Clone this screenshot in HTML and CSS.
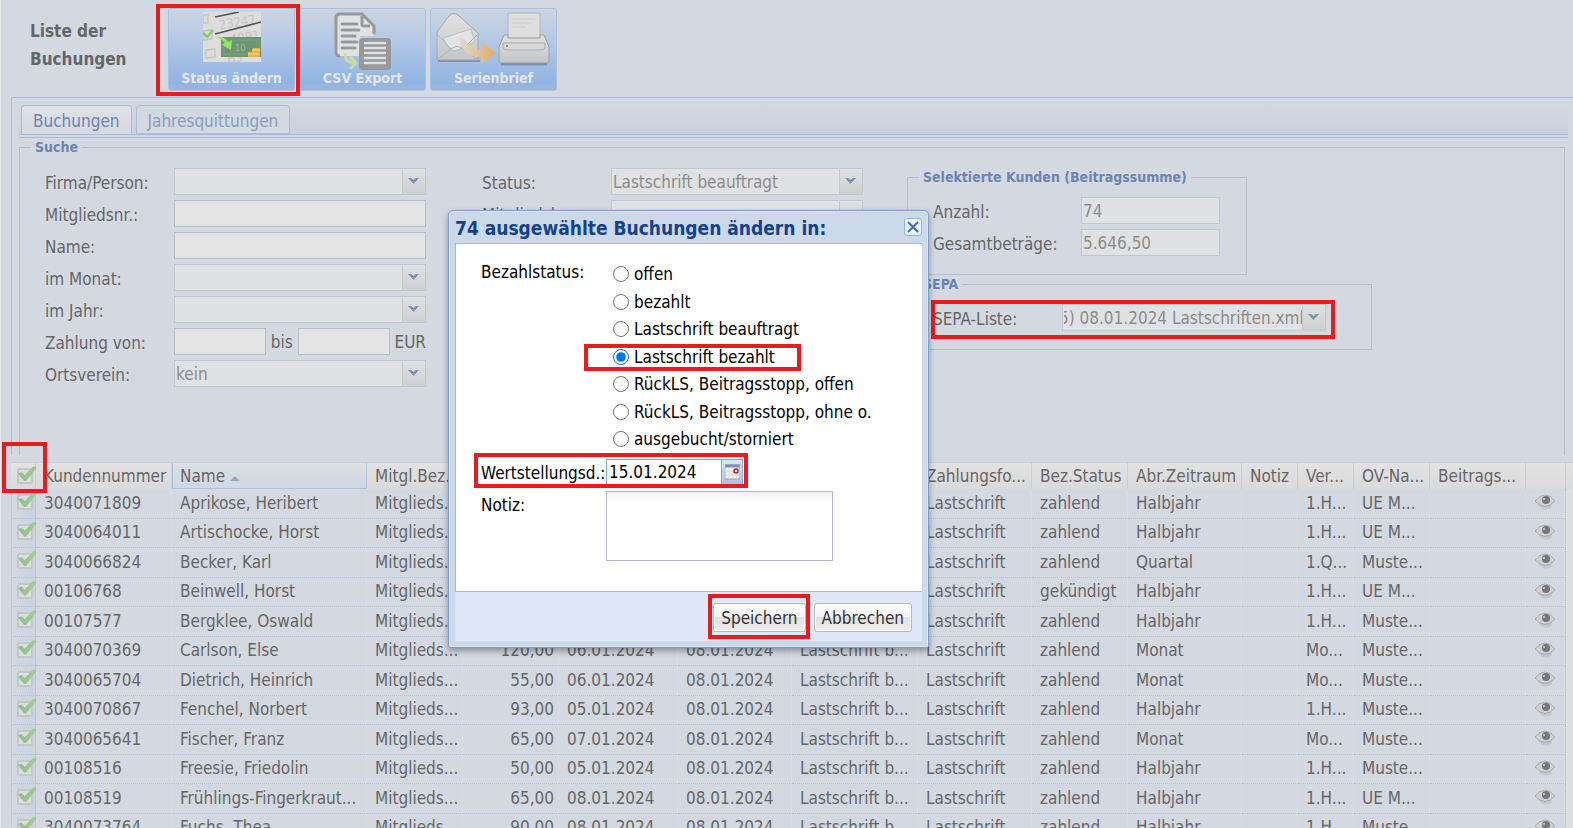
FILE: index.html
```html
<!DOCTYPE html>
<html lang="de">
<head>
    <meta charset="UTF-8">
    <meta name="viewport" content="width=device-width, initial-scale=1.0">
    <title>Liste der Buchungen</title>
    <link rel="stylesheet" href="styles.css">
</head>
<body>
    <header class="toolbar">
        <h1 class="title">Liste der Buchungen</h1>
        <div class="actions">
            <button class="action marked" type="button">
                <svg width="58" height="50" viewBox="0 0 58 50">
                    <rect width="58" height="50" fill="#dcdddc"/>
                    <g fill="none" stroke="#c2c3c2" stroke-width="1.3">
                        <path d="M0 3h5v8H0zM0 19l9-1v9l-9 1zM3 38l9-1v8l-9 1z"/>
                    </g>
                    <g class="digits" transform="rotate(-9 20 20)">
                        <text x="17" y="17">23247</text>
                        <text x="26" y="33">4091</text>
                        <text x="20" y="52">B3</text>
                    </g>
                    <path d="M12 5l24-5M12 22l46-12" stroke="#555" stroke-width="1.6"/>
                    <rect x="18" y="25" width="40" height="20" fill="#6f9672"/>
                    <rect x="21" y="28" width="34" height="14" fill="none" stroke="#7c9f7f"/>
                    <text class="note" x="32" y="39">10</text>
                    <path d="M0 21l4 4 6-7" fill="none" stroke="#7fcf5a" stroke-width="2.5"/>
                    <path d="M13 25c6-1 10 1 12 5l4-2-1 10-9-5 3-2c-2-3-5-4-9-6z" fill="#8fe861"/>
                    <path d="M45 45h12v-9h-7l-1 4h-4z" fill="#edb04a"/>
                    <path d="M45 42h11M49 38h8" stroke="#f6d372" stroke-width="1.5"/>
                </svg>
                <span>Status ändern</span>
            </button>
            <button class="action" type="button">
                <svg width="58" height="58" viewBox="0 0 58 58">
                    <path d="M5 44H3V5q0-3 3-3h21l12 12v10H26v20z" fill="#e1e2e2"/>
                    <path d="M6 44q-4 0-4-4V6q0-4 4-4h22l12 12v8M28 4v8q0 2 2 2h6" fill="none" stroke="#98999b" stroke-width="3"/>
                    <path d="M8 12h15M8 18h17M8 24h13M8 30h15M8 36h13" stroke="#98999b" stroke-width="3" stroke-linecap="round"/>
                    <rect x="25" y="26" width="32" height="32" rx="4" fill="#98999b"/>
                    <path d="M30 31h22M30 36h22M30 41h22M30 46h22M30 51h22" stroke="#dfe0e1" stroke-width="2.5"/>
                    <path d="M11 41c0 7 2 9 9 10M16 45l6 6-6 6" fill="none" stroke="#c9dba0" stroke-width="3"/>
                </svg>
                <span>CSV Export</span>
            </button>
            <button class="action" type="button">
                <svg width="118" height="54" viewBox="0 0 118 54">
                    <defs>
                        <linearGradient id="paper" x1="0" y1="0" x2="0" y2="1">
                            <stop offset="0" stop-color="#e2e2e2"/>
                            <stop offset="1" stop-color="#c4c5c6"/>
                        </linearGradient>
                        <linearGradient id="arrow" x1="0" y1="0" x2="1" y2="0">
                            <stop offset="0" stop-color="#dddad5"/>
                            <stop offset="1" stop-color="#e8aa5a"/>
                        </linearGradient>
                    </defs>
                    <path d="M3 49h42" stroke="#7f93b0" stroke-width="2"/>
                    <path d="M2 20L14 4q5-5 10 0l19 17v27H2z" fill="url(#paper)" stroke="#a5a6a8"/>
                    <path d="M8 26l28-9 4 13-20 9-6-2z" fill="#e3e3e3" stroke="#bcbdbf"/>
                    <path d="M2 22l14 15L2 48M43 22L28 37l15 11M16 37q6-5 12 0" fill="none" stroke="#aeb0b2"/>
                    <path d="M24 25c8 1 10 13 22 13v-8l15 11-15 11v-7c-14 0-20-7-22-20z" fill="url(#arrow)"/>
                    <path d="M66 52h46" stroke="#7f93b0" stroke-width="3"/>
                    <path d="M73 1h32v26H73z" fill="#dedede" stroke="#b5b6b8"/>
                    <path d="M77 7h24M77 11h20M77 15h14" stroke="#cbcccd"/>
                    <path d="M69 23h4v3h32v-3h4l5 12v14q0 2-2 2H66q-2 0-2-2V35z" fill="url(#paper)" stroke="#9c9ea0"/>
                    <path d="M68 31h42v4q0 3-3 3H71q-3 0-3-3z" fill="#d8d8d8" stroke="#a9abad"/>
                    <circle cx="72" cy="34" r="1" fill="#777"/>
                </svg>
                <span>Serienbrief</span>
            </button>
        </div>
    </header>

    <main class="panel">
        <nav class="tabs">
            <button class="tab active" type="button">Buchungen</button>
            <button class="tab" type="button">Jahresquittungen</button>
        </nav>

        <fieldset class="search">
            <legend>Suche</legend>
            <div class="columns">
                <div class="column">
                    <div class="row">
                        <label for="firma">Firma/Person:</label>
                        <span class="combo"><select id="firma" disabled><option></option></select></span>
                    </div>
                    <div class="row">
                        <label for="mitgliedsnr">Mitgliedsnr.:</label>
                        <input id="mitgliedsnr" type="text">
                    </div>
                    <div class="row">
                        <label for="name">Name:</label>
                        <input id="name" type="text">
                    </div>
                    <div class="row">
                        <label for="monat">im Monat:</label>
                        <span class="combo"><select id="monat" disabled><option></option></select></span>
                    </div>
                    <div class="row">
                        <label for="jahr">im Jahr:</label>
                        <span class="combo"><select id="jahr" disabled><option></option></select></span>
                    </div>
                    <div class="row">
                        <label for="von">Zahlung von:</label>
                        <div class="range">
                            <input id="von" type="text">
                            <label for="bis">bis</label>
                            <input id="bis" type="text">
                            <span>EUR</span>
                        </div>
                    </div>
                    <div class="row">
                        <label for="ortsverein">Ortsverein:</label>
                        <span class="combo"><select id="ortsverein" disabled><option>kein</option></select></span>
                    </div>
                </div>

                <div class="column">
                    <div class="row">
                        <label for="status">Status:</label>
                        <span class="combo"><select id="status" disabled><option>Lastschrift beauftragt</option></select></span>
                    </div>
                    <div class="row">
                        <label for="beitrag">Mitgliedsb.:</label>
                        <span class="combo"><select id="beitrag" disabled><option></option></select></span>
                    </div>
                </div>

                <div class="summary">
                    <fieldset class="selected">
                        <legend>Selektierte Kunden (Beitragssumme)</legend>
                        <div class="row">
                            <label for="anzahl">Anzahl:</label>
                            <input id="anzahl" type="text" value="74" disabled>
                        </div>
                        <div class="row">
                            <label for="gesamt">Gesamtbeträge:</label>
                            <input id="gesamt" type="text" value="5.646,50" disabled>
                        </div>
                    </fieldset>
                    <fieldset class="sepa">
                        <legend>SEPA</legend>
                        <div class="row marked">
                            <label for="sepa">SEPA-Liste:</label>
                            <span class="combo"><select id="sepa" disabled><option>5) 08.01.2024 Lastschriften.xml</option></select></span>
                        </div>
                    </fieldset>
                </div>
            </div>
        </fieldset>
    </main>

    <div class="grid">
        <table>
            <colgroup>
                <col class="w-check"><col class="w-number"><col class="w-name"><col class="w-type">
                <col class="w-type"><col class="w-paid"><col class="w-date"><col class="w-status">
                <col class="w-date"><col class="w-type"><col class="w-date"><col class="w-short">
                <col class="w-short"><col class="w-ov"><col class="w-type"><col class="w-view">
            </colgroup>
            <thead>
                <tr>
                    <th class="check marked"><input type="checkbox" aria-label="Alle auswählen" checked></th>
                    <th>Kundennummer</th>
                    <th class="sorted">Name</th>
                    <th>Mitgl.Bez.</th>
                    <th></th>
                    <th></th>
                    <th></th>
                    <th></th>
                    <th>Zahlungsfo...</th>
                    <th>Bez.Status</th>
                    <th>Abr.Zeitraum</th>
                    <th>Notiz</th>
                    <th>Ver...</th>
                    <th>OV-Na...</th>
                    <th>Beitrags...</th>
                    <th></th>
                </tr>
            </thead>
            <tbody id="rows"></tbody>
        </table>
    </div>

    <form class="dialog" role="dialog" aria-labelledby="dialogTitle">
        <div class="dialog-head">
            <h2 id="dialogTitle">74 ausgewählte Buchungen ändern in:</h2>
            <button class="close" type="button" aria-label="Schließen">
                <svg width="12" height="12" viewBox="0 0 12 12"><path d="M1 1l10 10M11 1L1 11" stroke="#4a6ba8" stroke-width="2"/></svg>
            </button>
        </div>
        <div class="dialog-body">
            <div class="field">
                <span class="label" id="statusLabel">Bezahlstatus:</span>
                <div class="radios" role="radiogroup" aria-labelledby="statusLabel">
                    <label><input type="radio" name="status"> offen</label>
                    <label><input type="radio" name="status"> bezahlt</label>
                    <label><input type="radio" name="status"> Lastschrift beauftragt</label>
                    <label class="marked"><input type="radio" name="status" checked> Lastschrift bezahlt</label>
                    <label><input type="radio" name="status"> RückLS, Beitragsstopp, offen</label>
                    <label><input type="radio" name="status"> RückLS, Beitragsstopp, ohne o.</label>
                    <label><input type="radio" name="status"> ausgebucht/storniert</label>
                </div>
            </div>
            <div class="field date marked">
                <label class="label" for="datum">Wertstellungsd.:</label>
                <input id="datum" type="text" value="15.01.2024">
                <button class="picker" type="button" aria-label="Kalender">
                    <svg width="15" height="16" viewBox="0 0 15 16">
                        <rect x="0" y="1" width="15" height="14" fill="#f7f5f2" stroke="#8d9dbb"/>
                        <path d="M0 2h15" stroke="#7f93b8" stroke-width="3"/>
                        <path d="M0 7h15M0 11h15M4 4v11M8 4v11M12 4v11" stroke="#ddd6cf"/>
                        <circle cx="11" cy="7" r="2" fill="#fff" stroke="#b5202c" stroke-width="1.5"/>
                    </svg>
                </button>
            </div>
            <div class="field note-field">
                <label class="label" for="notiz">Notiz:</label>
                <textarea id="notiz"></textarea>
            </div>
        </div>
        <div class="dialog-foot">
            <span class="marked"><button class="btn" type="submit">Speichern</button></span>
            <button class="btn" type="button">Abbrechen</button>
        </div>
    </form>

    <script>
        // Nummer, Name, Betrag, Zahlungsdatum, Bez.Status, Zeitraum, Vertrag, Ortsverein
        const bookings = [
            ['3040071809', 'Aprikose, Heribert', '', '', 'zahlend', 'Halbjahr', '1.H...', 'UE M...'],
            ['3040064011', 'Artischocke, Horst', '', '', 'zahlend', 'Halbjahr', '1.H...', 'UE M...'],
            ['3040066824', 'Becker, Karl', '', '', 'zahlend', 'Quartal', '1.Q...', 'Muste...'],
            ['00106768', 'Beinwell, Horst', '', '', 'gekündigt', 'Halbjahr', '1.H...', 'UE M...'],
            ['00107577', 'Bergklee, Oswald', '', '', 'zahlend', 'Halbjahr', '1.H...', 'Muste...'],
            ['3040070369', 'Carlson, Else', '120,00', '06.01.2024', 'zahlend', 'Monat', 'Mo...', 'Muste...'],
            ['3040065704', 'Dietrich, Heinrich', '55,00', '06.01.2024', 'zahlend', 'Monat', 'Mo...', 'Muste...'],
            ['3040070867', 'Fenchel, Norbert', '93,00', '05.01.2024', 'zahlend', 'Halbjahr', '1.H...', 'Muste...'],
            ['3040065641', 'Fischer, Franz', '65,00', '07.01.2024', 'zahlend', 'Monat', 'Mo...', 'Muste...'],
            ['00108516', 'Freesie, Friedolin', '50,00', '05.01.2024', 'zahlend', 'Halbjahr', '1.H...', 'Muste...'],
            ['00108519', 'Frühlings-Fingerkraut...', '65,00', '08.01.2024', 'zahlend', 'Halbjahr', '1.H...', 'UE M...'],
            ['3040073764', 'Fuchs, Thea', '90,00', '08.01.2024', 'zahlend', 'Halbjahr', '1.H...', 'Muste...']
        ];

        const eye = `
            <svg width="20" height="16" viewBox="0 0 20 16">
                <path d="M3 10q8 6 15-2l-2 6q-6 3-10 0z" fill="#c3c6cb"/>
                <path d="M0 7q10-12 20 0-10 11-20 0z" fill="#cfd0d2" stroke="#a9abae"/>
                <circle cx="11" cy="6" r="4" fill="#77787b"/>
                <circle cx="9" cy="5" r="1" fill="#cfd0d2"/>
            </svg>`;

        document.getElementById('rows').innerHTML = bookings.map(b => `
            <tr>
                <td class="check"><input type="checkbox" aria-label="${b[1]}" checked></td>
                <td>${b[0]}</td>
                <td>${b[1]}</td>
                <td>Mitglieds...</td>
                <td class="amount">${b[2]}</td>
                <td>${b[3]}</td>
                <td>08.01.2024</td>
                <td>Lastschrift b...</td>
                <td>Lastschrift</td>
                <td>${b[4]}</td>
                <td>${b[5]}</td>
                <td></td>
                <td>${b[6]}</td>
                <td>${b[7]}</td>
                <td></td>
                <td class="view">${eye}</td>
            </tr>`).join('');
    </script>
</body>
</html>
```
FILE: styles.css
```css
* {
    margin: 0;
    padding: 0;
    box-sizing: border-box;
}

body {
    font-family: "DejaVu Sans Condensed", "DejaVu Sans", sans-serif;
    font-size: 17px;
    line-height: 24px;
    color: #666;
    background: #d4d9e1;
    border-left: 1px solid #e6e8ea;
    height: 100vh;
    overflow: hidden;
    position: relative;
}

input,
select,
textarea,
button {
    font: inherit;
    color: inherit;
}

/* red highlight frames */
.marked {
    position: relative;
}

.marked::after {
    content: '';
    position: absolute;
    border: 4px solid #e81c1c;
    pointer-events: none;
    z-index: 2;
}

/* toolbar */
.toolbar {
    display: flex;
    gap: 27px;
    padding: 8px 0 6px 29px;
}

.title {
    width: 111px;
    padding-top: 9px;
    font-size: 17px;
    line-height: 28px;
}

.actions {
    display: flex;
    gap: 4px;
}

.action {
    display: flex;
    flex-direction: column;
    align-items: center;
    justify-content: space-between;
    width: 127px;
    height: 83px;
    padding: 3px 0 4px;
    border: 1px solid #a9c1e0;
    border-radius: 3px;
    background: linear-gradient(#ccd5e2 0, #b4c9e6 40%, #8fb4e4 92%, #9ab5dc 92%);
    color: #e6e6e6;
    font-size: 14px;
    line-height: 16px;
    font-weight: bold;
}

.action svg {
    flex: none;
}

.action.marked::after {
    inset: -5px -6px -6px -13px;
}

.digits {
    font-size: 13px;
    font-weight: normal;
    fill: #c4c5c4;
}

.note {
    font-size: 9px;
    font-weight: normal;
    fill: #9dba9e;
}

/* tabs and search form */
.panel {
    margin-left: 10px;
    padding-left: 7px;
    border: 1px solid #a9bedb;
    border-width: 1px 0 0 1px;
}

.tabs {
    display: flex;
    align-items: flex-end;
    gap: 4px;
    height: 40px;
    margin-right: 5px;
    padding: 0 2px 3px;
    border-bottom: 1px solid #a9bedb;
    background: linear-gradient(#d4d9e1, #cad1de 36px, #a9bedb 36px, #a9bedb 37px, #d0d8e4 37px);
}

.tab {
    height: 29px;
    padding: 2px 11px 0;
    border: 1px solid #a9bedb;
    border-radius: 4px 4px 0 0;
    background: linear-gradient(#d0d8e2, #d3dae3);
    color: #8a9dbd;
}

.tab.active {
    border-bottom-color: #d4d9e1;
    background: linear-gradient(#e0e1e3, #d4d9e1);
    color: #6c84b0;
}

fieldset {
    min-width: 0;
    padding: 12px 25px 13px;
    border: 1px solid #b9bec9;
}

legend {
    margin-left: -14px;
    padding: 0 4px;
    font-size: 14px;
    line-height: 16px;
    font-weight: bold;
    color: #6c84b0;
}

.search {
    min-height: 316px;
    margin: 1px 8px 0 0;
    padding-top: 13px;
    border-bottom: 0;
}

.columns {
    display: flex;
}

.column {
    width: 381px;
    margin-right: 56px;
}

.column + .column {
    margin-right: 44px;
}

.row {
    display: flex;
    align-items: center;
    margin-bottom: 5px;
}

.row > label {
    flex: 0 0 129px;
    padding-top: 2px;
}

.row input,
.row select {
    width: 100%;
    height: 27px;
    padding: 0 1px;
    border: 1px solid #b9bec9;
    border-radius: 0;
    background: #e4e4e4;
}

.row input:disabled,
.row select:disabled {
    border-color: #c3c7cf;
    background: #e0e1e2;
    color: #8c8c8c;
    opacity: 1;
}

.row select {
    display: block;
    appearance: none;
}

.combo {
    position: relative;
    flex: 1;
    overflow: hidden;
}

.combo::before {
    content: '';
    position: absolute;
    top: 1px;
    right: 1px;
    width: 22px;
    height: 25px;
    border-left: 1px solid #c3c7cf;
    background: linear-gradient(#dfe0e1, #cfcfd0);
}

.combo::after {
    content: '';
    position: absolute;
    top: 10px;
    right: 7px;
    width: 11px;
    height: 6px;
    background: #7e92b8;
    clip-path: polygon(0 0, 30% 0, 50% 35%, 70% 0, 100% 0, 50% 100%);
}

.range {
    display: flex;
    flex: 1;
    align-items: center;
    justify-content: space-between;
}

.range input {
    width: 92px;
}

.summary {
    width: 465px;
    margin-top: 1px;
}

.selected {
    width: 340px;
}

.selected label {
    flex-basis: 148px;
}

.selected input {
    width: 139px;
}

.sepa {
    margin-top: 1px;
}

.sepa .combo {
    flex: 0 0 264px;
}

.sepa select {
    text-indent: -5px;
}

.sepa .marked::after {
    inset: -4px 11px -8px -2px;
}

/* grid */
.grid {
    margin: 7px 0 0 10px;
    padding-right: 7px;
    border-top: 1px solid #c5d0de;
    background: linear-gradient(#e2e2e2, #d9dadb 26px, #dcdee0 26px);
}

.grid table {
    width: 100%;
    table-layout: fixed;
    border-collapse: separate;
    border-spacing: 0;
}

.w-check { width: 25px; }
.w-number { width: 136px; }
.w-name { width: 195px; }
.w-type { width: 96px; }
.w-paid { width: 119px; }
.w-date { width: 114px; }
.w-status { width: 126px; }
.w-short { width: 56px; }
.w-ov { width: 76px; }
.w-view { width: 40px; }

.grid th,
.grid td {
    padding: 0 0 0 8px;
    text-align: left;
    font-weight: normal;
    white-space: nowrap;
    overflow: hidden;
}

.grid th {
    height: 26px;
    border-right: 1px solid #cdced0;
}

.grid th.sorted {
    padding-left: 7px;
    border: 1px solid #aec4e0;
    border-top: 0;
    background: linear-gradient(#dcdfe3, #cfd8e3);
}

.sorted::after {
    content: '';
    display: inline-block;
    margin-left: 5px;
    border: 5px solid transparent;
    border-top: 0;
    border-bottom-color: #8fa9d0;
    vertical-align: 1px;
}

.grid td {
    height: 30px;
    padding-bottom: 2px;
    border-right: 1px solid #d9dde1;
    border-bottom: 1px dotted #b4c0d6;
    background: #d4d9e1;
}

.grid tr:nth-child(even) td {
    height: 29px;
}

.grid .amount {
    padding-right: 4px;
    text-align: right;
}

.grid .check {
    padding-left: 6px;
    overflow: visible;
}

.grid td.check {
    padding: 0 0 3px 5px;
    border-left: 1px dotted #b4c0d6;
    border-right-color: #b4c6e2;
    background: linear-gradient(90deg, #d4d9e1, #c9d3e2);
}

.check input {
    position: relative;
    display: block;
    width: 16px;
    height: 16px;
    appearance: none;
    border: 2px solid #c6c7c8;
    border-radius: 2px;
    background: #dcdddd;
}

.check input::before {
    content: '';
    position: absolute;
    top: -4px;
    left: -1px;
    width: 19px;
    height: 15px;
    background: linear-gradient(90deg, #8fbf8b, #a2cd98);
    clip-path: polygon(0 50%, 18% 40%, 35% 62%, 82% 0, 100% 12%, 42% 100%, 32% 100%);
}

.check.marked::after {
    inset: -21px -12px -4px -9px;
}

.grid .view {
    padding: 0 0 3px 9px;
    border-right: 1px dotted #b4c0d6;
}

.view svg {
    display: block;
}

/* dialog */
.dialog {
    position: absolute;
    top: 210px;
    left: 447px;
    width: 481px;
    padding: 0 6px 6px;
    border: 1px solid #7f9fc8;
    border-radius: 5px 5px 2px 2px;
    background: #ccd9e8;
    box-shadow: 0 3px 6px rgba(0, 0, 0, 0.35), inset 0 0 0 1px #dbe5f1;
    color: #000;
    z-index: 3;
}

.dialog-head {
    display: flex;
    align-items: center;
    justify-content: space-between;
    height: 32px;
}

.dialog h2 {
    font-size: 19px;
    line-height: 24px;
    color: #15428b;
    padding-top: 2px;
}

.close {
    display: flex;
    align-items: center;
    justify-content: center;
    width: 18px;
    height: 18px;
    border: 1px solid #8fb4e6;
    border-radius: 3px;
    background: #eaf2fc;
}

.dialog-body {
    min-height: 348px;
    padding: 16px 25px 30px;
    border: 1px solid #99bbe8;
    border-width: 1px 0 1px 1px;
    background: #fff;
}

.field {
    display: flex;
}

.label {
    flex: 0 0 125px;
    white-space: nowrap;
}

.radios {
    padding-left: 7px;
}

.radios label {
    display: flex;
    align-items: center;
    gap: 5px;
    width: fit-content;
    height: 28px;
    line-height: 28px;
}

.radios label:nth-child(even) {
    height: 27px;
}

.radios input {
    width: 16px;
    height: 16px;
}

.radios .marked::after {
    inset: 1px -26px -1px -29px;
}

.field.date {
    height: 26px;
    margin: 6px 0;
}

.date .label,
.note-field .label {
    padding-top: 2px;
}

.date input {
    width: 116px;
    padding: 0 2px;
    border: 1px solid #7eadd9;
}

.date.marked::after {
    inset: -6px 149px -3px -7px;
}

.picker {
    display: flex;
    align-items: center;
    justify-content: center;
    width: 21px;
    border: 1px solid #7eadd9;
    border-left: 0;
    background: linear-gradient(#d9e6f6, #a9c3e4);
}

.field textarea {
    width: 227px;
    height: 70px;
    border: 1px solid #b5b8c8;
    background: linear-gradient(#f0f0f2, #fff 10px);
    resize: none;
}

.dialog-foot {
    display: flex;
    justify-content: flex-end;
    gap: 8px;
    padding: 11px 10px 9px;
    background: #dfe8f6;
}

.dialog-foot .marked {
    display: flex;
}

.dialog-foot .marked::after {
    inset: -9px -4px -7px -5px;
}

.btn {
    height: 29px;
    padding: 0 7px;
    border: 1px solid #b8b8b8;
    border-radius: 3px;
    background: linear-gradient(#fff 0, #f2f2f2 50%, #e2e2e2 50%, #ececec);
    box-shadow: inset 0 0 0 1px #fff;
    color: #333;
}
```
